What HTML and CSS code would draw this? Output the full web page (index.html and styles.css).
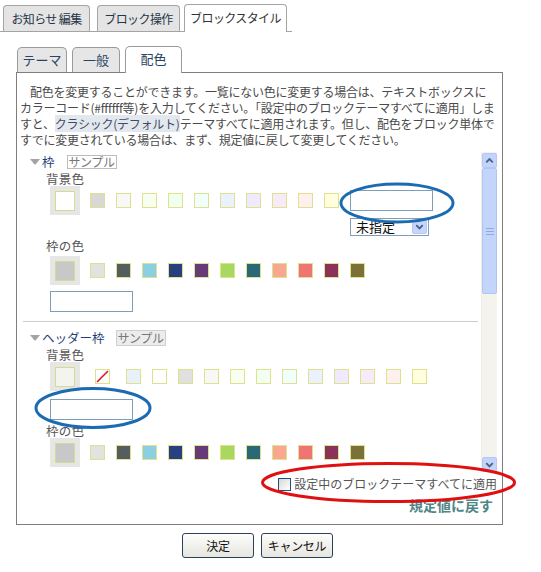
FILE: index.html
```html
<!DOCTYPE html>
<html lang="ja">
<head>
    <meta charset="UTF-8">
    <title>ブロックスタイル</title>
    <link rel="stylesheet" href="styles.css">
</head>
<body>
    <div class="tabs">
        <div class="tab t1">お知らせ 編集</div>
        <div class="tab t2">ブロック操作</div>
        <div class="tab t3 active">ブロックスタイル</div>
    </div>

    <div class="dialog">
        <div class="subtabs">
            <div class="subtab s1">テーマ</div>
            <div class="subtab s2">一般</div>
            <div class="subtab s3 active">配色</div>
        </div>

        <div class="panel">
            <p class="intro">配色を変更することができます。一覧にない色に変更する場合は、テキストボックスに<br>カラーコード(#ffffff等)を入力してください。「設定中のブロックテーマすべてに適用」しま<br>すと、<span class="theme-link">クラシック(デフォルト)</span>テーマすべてに適用されます。但し、配色をブロック単体で<br>すでに変更されている場合は、まず、規定値に戻して変更してください。</p>

            <div class="scroller">
                <div class="scroll-body">
                    <!-- 枠 -->
                    <div class="sec-head first">
                        <svg class="tri" width="10" height="6" viewBox="0 0 10 6"><polygon points="0,0 10,0 5,6" fill="#a3a3a3"/></svg>
                        <span class="sec-name">枠</span>
                        <span class="sample">サンプル</span>
                    </div>
                    <div class="label lb1">背景色</div>
                    <div class="sw-row">
                        <span class="sel"><i style="background:#ffffff"></i></span>
                        <span class="sw" style="background:#d8d8d8"></span>
                        <span class="sw" style="background:#f8f8f8"></span>
                        <span class="sw" style="background:#f8fff0"></span>
                        <span class="sw" style="background:#f0fff0"></span>
                        <span class="sw" style="background:#f0fffc"></span>
                        <span class="sw" style="background:#eaf2ff"></span>
                        <span class="sw" style="background:#f0eaff"></span>
                        <span class="sw" style="background:#f8eaf8"></span>
                        <span class="sw" style="background:#fff0f0"></span>
                        <span class="sw" style="background:#ffffe0"></span>
                        <span class="code-col">
                            <span class="code"></span>
                            <span class="select">未指定<b><svg width="14" height="14" viewBox="0 0 14 14"><polyline points="3.5,5 7,8.5 10.5,5" fill="none" stroke="#4d6185" stroke-width="2"/></svg></b></span>
                        </span>
                    </div>
                    <div class="label lb2">枠の色</div>
                    <div class="sw-row r2">
                        <span class="sel"><i style="background:#c8c8c8"></i></span>
                        <span class="sw" style="background:#e2e2e2"></span>
                        <span class="sw" style="background:#555e5e"></span>
                        <span class="sw" style="background:#8ccfe0"></span>
                        <span class="sw" style="background:#283f80"></span>
                        <span class="sw" style="background:#673a78"></span>
                        <span class="sw" style="background:#a8d860"></span>
                        <span class="sw" style="background:#2a6878"></span>
                        <span class="sw" style="background:#f8a890"></span>
                        <span class="sw" style="background:#f07474"></span>
                        <span class="sw" style="background:#8a3258"></span>
                        <span class="sw" style="background:#7a7038"></span>
                    </div>
                    <div class="code solo"></div>

                    <div class="sep"></div>

                    <!-- ヘッダー枠 -->
                    <div class="sec-head second">
                        <svg class="tri" width="10" height="6" viewBox="0 0 10 6"><polygon points="0,0 10,0 5,6" fill="#a3a3a3"/></svg>
                        <span class="sec-name">ヘッダー枠</span>
                        <span class="sample filled">サンプル</span>
                    </div>
                    <div class="label lb3">背景色</div>
                    <div class="sw-row">
                        <span class="sel"><i style="background:#f4f4ee"></i></span>
                        <span class="sw none"><svg width="13" height="13" viewBox="0 0 13 13"><line x1="1" y1="12" x2="12" y2="1" stroke="#e01818" stroke-width="1.6"/></svg></span>
                        <span class="sw after-none" style="background:#e8f0f8"></span>
                        <span class="sw" style="background:#ffffff"></span>
                        <span class="sw" style="background:#e0e0e0"></span>
                        <span class="sw" style="background:#f8f8f8"></span>
                        <span class="sw" style="background:#f8fff0"></span>
                        <span class="sw" style="background:#f0fff0"></span>
                        <span class="sw" style="background:#f0fffc"></span>
                        <span class="sw" style="background:#eaf2ff"></span>
                        <span class="sw" style="background:#f0eaff"></span>
                        <span class="sw" style="background:#f8eaf8"></span>
                        <span class="sw" style="background:#fff0f0"></span>
                        <span class="sw" style="background:#ffffe0"></span>
                    </div>
                    <div class="code solo s2"></div>
                    <div class="label lb4">枠の色</div>
                    <div class="sw-row">
                        <span class="sel"><i style="background:#c8c8c8"></i></span>
                        <span class="sw" style="background:#e2e2e2"></span>
                        <span class="sw" style="background:#555e5e"></span>
                        <span class="sw" style="background:#8ccfe0"></span>
                        <span class="sw" style="background:#283f80"></span>
                        <span class="sw" style="background:#673a78"></span>
                        <span class="sw" style="background:#a8d860"></span>
                        <span class="sw" style="background:#2a6878"></span>
                        <span class="sw" style="background:#f8a890"></span>
                        <span class="sw" style="background:#f07474"></span>
                        <span class="sw" style="background:#8a3258"></span>
                        <span class="sw" style="background:#7a7038"></span>
                    </div>
                </div>

                <div class="scrollbar">
                    <div class="sb-btn"><svg width="14" height="14" viewBox="0 0 14 14"><polyline points="3.5,8.5 7,5 10.5,8.5" fill="none" stroke="#4d6185" stroke-width="2"/></svg></div>
                    <div class="sb-thumb"><svg width="8" height="7" viewBox="0 0 8 7"><path d="M0 0.5H8M0 3.5H8M0 6.5H8" stroke="#8fa8e0" stroke-width="1"/></svg></div>
                    <div class="sb-track"></div>
                    <div class="sb-btn"><svg width="14" height="14" viewBox="0 0 14 14"><polyline points="3.5,5 7,8.5 10.5,5" fill="none" stroke="#4d6185" stroke-width="2"/></svg></div>
                </div>
            </div>

            <label class="apply"><span class="check"></span>設定中のブロックテーマすべてに適用</label>
            <div class="reset">規定値に戻す</div>
        </div>

        <div class="buttons">
            <button class="btn">決定</button>
            <button class="btn">キャンセル</button>
        </div>
    </div>

    <!-- 注釈の丸 -->
    <svg class="marks" width="541" height="572" viewBox="0 0 541 572">
        <ellipse cx="397" cy="203" rx="56" ry="19" fill="none" stroke="#1b6bb3" stroke-width="3"/>
        <ellipse cx="93" cy="408" rx="57" ry="19.5" fill="none" stroke="#1b6bb3" stroke-width="3"/>
        <ellipse cx="388.5" cy="482.5" rx="126" ry="19" fill="none" stroke="#e01010" stroke-width="3"/>
    </svg>
</body>
</html>
```

FILE: styles.css
```css
* {
  box-sizing: border-box;
}

body {
  margin: 0;
  position: relative;
  background: #fff;
  font-family: "Noto Sans CJK JP", "Liberation Sans", sans-serif;
  font-size: 12px;
  color: #444;
}

/* 上のタブ */
.tabs {
  display: flex;
  align-items: flex-end;
  width: 292px;
  height: 32px;
  padding-left: 3px;
  border-bottom: 1px solid #a4a4a4;
}

.tab {
  height: 26px;
  border: 1px solid #a4a4a4;
  border-bottom: none;
  border-radius: 4px 4px 0 0;
  background: #e4e4e4;
  color: #253548;
  font-size: 12px;
  letter-spacing: -0.6px;
  line-height: 26px;
  text-align: center;
}

.tab.t1 { width: 87px; margin-right: 7px; }
.tab.t2 { width: 83px; margin-right: 4px; }
.tab.t3 { width: 103px; }

.tab.active {
  height: 28px;
  margin-bottom: -1px;
  background: #fff;
  color: #333;
}

/* ダイアログ */
.dialog {
  width: 487px;
  margin-left: 16px;
}

.subtabs {
  display: flex;
  align-items: flex-end;
  height: 40px;
  padding-left: 1px;
}

.subtab {
  height: 25px;
  margin-right: 5px;
  border: 1px solid #9a9a9a;
  border-bottom: none;
  border-radius: 5px 5px 0 0;
  background: #e6e6e6;
  color: #2a4466;
  font-size: 13px;
  line-height: 24px;
  text-align: center;
}

.subtab.s1 { width: 50px; }
.subtab.s2 { width: 48px; }
.subtab.s3 { width: 57px; }

.subtab.active {
  position: relative;
  height: 27px;
  margin-bottom: -1px;
  background: #fff;
}

.panel {
  border: 1px solid #7e7e7e;
  padding-bottom: 11px;
}

.intro {
  margin: 0;
  padding: 11px 0 0 3px;
  font-size: 12px;
  line-height: 16px;
  letter-spacing: -0.25px;
  white-space: nowrap;
  text-indent: 10px;
  color: #4a4a4a;
}

.theme-link {
  background: #e3e8ee;
  color: #3d4c66;
}

/* スクロール領域 */
.scroller {
  display: flex;
  width: 475px;
  height: 320px;
  margin: 4px 0 0 5px;
  overflow: hidden;
}

.scroll-body {
  flex: 1;
  padding-left: 8px;
  overflow: hidden;
}

.sec-head {
  display: flex;
  align-items: center;
}

.sec-head.first {
  height: 14px;
  margin-top: 3px;
}

.sec-head.second {
  height: 17px;
  margin-top: 7px;
}

.tri {
  flex: none;
}

.sec-name {
  margin-left: 2px;
  color: #1f3d78;
  font-size: 12.5px;
  line-height: 14px;
}

.sample {
  display: inline-block;
  width: 50px;
  height: 14px;
  margin-left: 12px;
  border: 1px solid #bdbdbd;
  color: #777;
  font-size: 12px;
  line-height: 12px;
  text-align: center;
  letter-spacing: -0.4px;
}

.sample.filled {
  height: 16px;
  margin-left: 11px;
  background: #ececec;
  border-color: #cfcfcf;
  line-height: 14px;
}

.label {
  height: 16px;
  margin: 1px 0 0 16px;
  color: #555;
  font-size: 12.5px;
  line-height: 16px;
  letter-spacing: 0.3px;
}

.label.lb1 { margin-top: 2px; height: 15px; line-height: 15px; }
.label.lb2 { margin-top: 2px; }
.label.lb3 { margin-top: 1px; height: 15px; line-height: 15px; }
.label.lb4 { margin-top: 4px; height: 14px; line-height: 14px; }

.sw-row {
  display: flex;
  align-items: flex-start;
  margin-left: 20px;
}

.sw-row.r2 {
  margin-top: 2px;
}

.sel {
  display: flex;
  align-items: center;
  justify-content: center;
  width: 30px;
  height: 29px;
  margin-right: -1px;
  background: #e6e6e6;
}

.sel i {
  display: block;
  width: 20px;
  height: 20px;
  border: 1px solid #d6dc8c;
}

.sw {
  flex: none;
  width: 15px;
  height: 15px;
  margin: 7px 0 0 11px;
  border: 1px solid #dfe28c;
}

.sw.none {
  display: flex;
  align-items: center;
  justify-content: center;
  margin-left: 16px;
  background: #fff;
}

.sw.after-none {
  margin-left: 16px;
}

.code-col {
  display: flex;
  flex-direction: column;
  margin: 4px 0 0 11px;
}

.code {
  display: block;
  width: 83px;
  height: 21px;
  border: 1px solid #7f9db9;
  background: #fff;
}

.code.solo {
  margin: 6px 0 0 20px;
}

.code.solo.s2 {
  margin-top: 8px;
}

.select {
  display: flex;
  align-items: center;
  justify-content: space-between;
  width: 79px;
  height: 18px;
  margin-top: 7px;
  padding: 0 1px 0 5px;
  border: 1px solid #7f9db9;
  color: #111;
  font-size: 13px;
  line-height: 16px;
}

.select b {
  display: flex;
  align-items: center;
  justify-content: center;
  width: 15px;
  height: 14px;
  border: 1px solid #b6c9f5;
  border-radius: 2px;
  background: #c6d6fb;
}

.sep {
  height: 1px;
  margin: 9px 3px 0 -7px;
  background: #cccccc;
}

/* スクロールバー */
.scrollbar {
  display: flex;
  flex-direction: column;
  width: 16px;
  padding-top: 1px;
  background: #f4f3ee;
  border-left: 1px solid #efeee8;
}

.sb-btn {
  display: flex;
  align-items: center;
  justify-content: center;
  height: 15px;
  border: 1px solid #b4c8f6;
  border-radius: 2px;
  background: #c3d4fc;
}

.sb-thumb {
  display: flex;
  align-items: center;
  justify-content: center;
  height: 126px;
  border: 1px solid #b1c5f4;
  border-radius: 2px;
  background: #c4d5fc;
}

.sb-track {
  flex: 1;
}

/* 下の部分 */
.apply {
  display: flex;
  align-items: center;
  justify-content: flex-end;
  height: 14px;
  margin-top: 5px;
  padding-right: 5px;
  color: #555;
  font-size: 12px;
  line-height: 14px;
}

.check {
  width: 13px;
  height: 13px;
  margin-right: 3px;
  border: 1px solid #1c5180;
  background: linear-gradient(135deg, #d8d8d2, #fff);
}

.reset {
  margin-top: 6px;
  padding-right: 9px;
  color: #4f8585;
  font-size: 14px;
  font-weight: bold;
  line-height: 16px;
  text-align: right;
}

.buttons {
  display: flex;
  justify-content: center;
  gap: 7px;
  margin-top: 8px;
  padding-right: 4px;
}

.btn {
  width: 72px;
  height: 25px;
  padding: 0;
  border: 1px solid #2b4159;
  border-radius: 3px;
  background: linear-gradient(#fdfdfb, #e6e5df);
  color: #111;
  font-family: "Noto Sans CJK JP", "Liberation Sans", sans-serif;
  font-size: 12px;
  letter-spacing: -0.3px;
}

.marks {
  position: absolute;
  top: 0;
  left: 0;
  pointer-events: none;
}
```
